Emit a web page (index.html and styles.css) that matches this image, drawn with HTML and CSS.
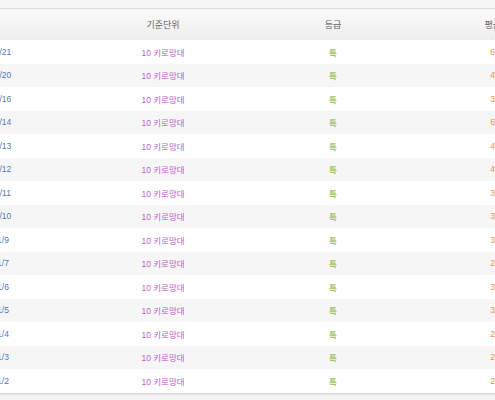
FILE: index.html
```html
<!DOCTYPE html>
<html lang="ko">
<head>
<meta charset="utf-8">
<title>시세표</title>
<link rel="stylesheet" href="styles.css">
</head>
<body>
<div class="page">
  <div class="topbar"></div>
  <div class="table">
    <div class="row head">
      <div class="cell date-h">날짜</div>
      <div class="cell">기준단위</div>
      <div class="cell">등급</div>
      <div class="cell">평균가격</div>
    </div>
    <div class="row"><div class="cell date">2014/01/21</div><div class="cell unit">10 키로망대</div><div class="cell grade">특</div><div class="cell price">6,150</div></div>
    <div class="row"><div class="cell date">2014/01/20</div><div class="cell unit">10 키로망대</div><div class="cell grade">특</div><div class="cell price">4,830</div></div>
    <div class="row"><div class="cell date">2014/01/16</div><div class="cell unit">10 키로망대</div><div class="cell grade">특</div><div class="cell price">3,920</div></div>
    <div class="row"><div class="cell date">2014/01/14</div><div class="cell unit">10 키로망대</div><div class="cell grade">특</div><div class="cell price">6,010</div></div>
    <div class="row"><div class="cell date">2014/01/13</div><div class="cell unit">10 키로망대</div><div class="cell grade">특</div><div class="cell price">4,570</div></div>
    <div class="row"><div class="cell date">2014/01/12</div><div class="cell unit">10 키로망대</div><div class="cell grade">특</div><div class="cell price">4,200</div></div>
    <div class="row"><div class="cell date">2014/01/11</div><div class="cell unit">10 키로망대</div><div class="cell grade">특</div><div class="cell price">3,880</div></div>
    <div class="row"><div class="cell date">2014/01/10</div><div class="cell unit">10 키로망대</div><div class="cell grade">특</div><div class="cell price">3,640</div></div>
    <div class="row"><div class="cell date">2014/01/9</div><div class="cell unit">10 키로망대</div><div class="cell grade">특</div><div class="cell price">3,310</div></div>
    <div class="row"><div class="cell date">2014/01/7</div><div class="cell unit">10 키로망대</div><div class="cell grade">특</div><div class="cell price">2,990</div></div>
    <div class="row"><div class="cell date">2014/01/6</div><div class="cell unit">10 키로망대</div><div class="cell grade">특</div><div class="cell price">3,150</div></div>
    <div class="row"><div class="cell date">2014/01/5</div><div class="cell unit">10 키로망대</div><div class="cell grade">특</div><div class="cell price">3,020</div></div>
    <div class="row"><div class="cell date">2014/01/4</div><div class="cell unit">10 키로망대</div><div class="cell grade">특</div><div class="cell price">2,870</div></div>
    <div class="row"><div class="cell date">2014/01/3</div><div class="cell unit">10 키로망대</div><div class="cell grade">특</div><div class="cell price">2,760</div></div>
    <div class="row"><div class="cell date">2014/01/2</div><div class="cell unit">10 키로망대</div><div class="cell grade">특</div><div class="cell price">2,640</div></div>
  </div>
</div>
</body>
</html>
```
FILE: styles.css
```css
html, body {
  margin: 0;
  padding: 0;
  background: #f4f4f4;
  overflow: hidden;
}
.page {
  width: 495px;
  height: 400px;
  overflow: hidden;
  background: #f4f4f4;
  font-family: "Liberation Sans", "Noto Sans CJK KR", sans-serif;
}
.topbar {
  height: 8px;
  background: #f7f7f7;
  border-bottom: 1px solid #dcdcdc;
}
.table {
  margin-left: -92px;
  width: 680px;
  background: #fff;
  border-bottom: 1px solid #d6d6d6;
  box-shadow: 0 1px 2px rgba(0,0,0,0.08);
}
.row {
  display: grid;
  grid-template-columns: 170px 170px 170px 166px;
  height: 23.5px;
  align-items: center;
  font-size: 8.5px;
}
.row:nth-child(odd) {
  background: #f6f6f6;
}
.row.head {
  height: 30px;
  background: linear-gradient(#fafafa, #eeeeee);
  border-bottom: 1px dotted #dedede;
  box-sizing: border-box;
  font-size: 9px;
  color: #666;
  margin-top: 1px;
}
.cell {
  text-align: center;
  white-space: nowrap;
}
.date { color: #5577b0; padding-right: 6px; }
.date-h { padding-right: 6px; }
.unit { color: #c35ec8; }
.grade { color: #a6c46a; font-weight: bold; }
.price { color: #f1913e; }
```
